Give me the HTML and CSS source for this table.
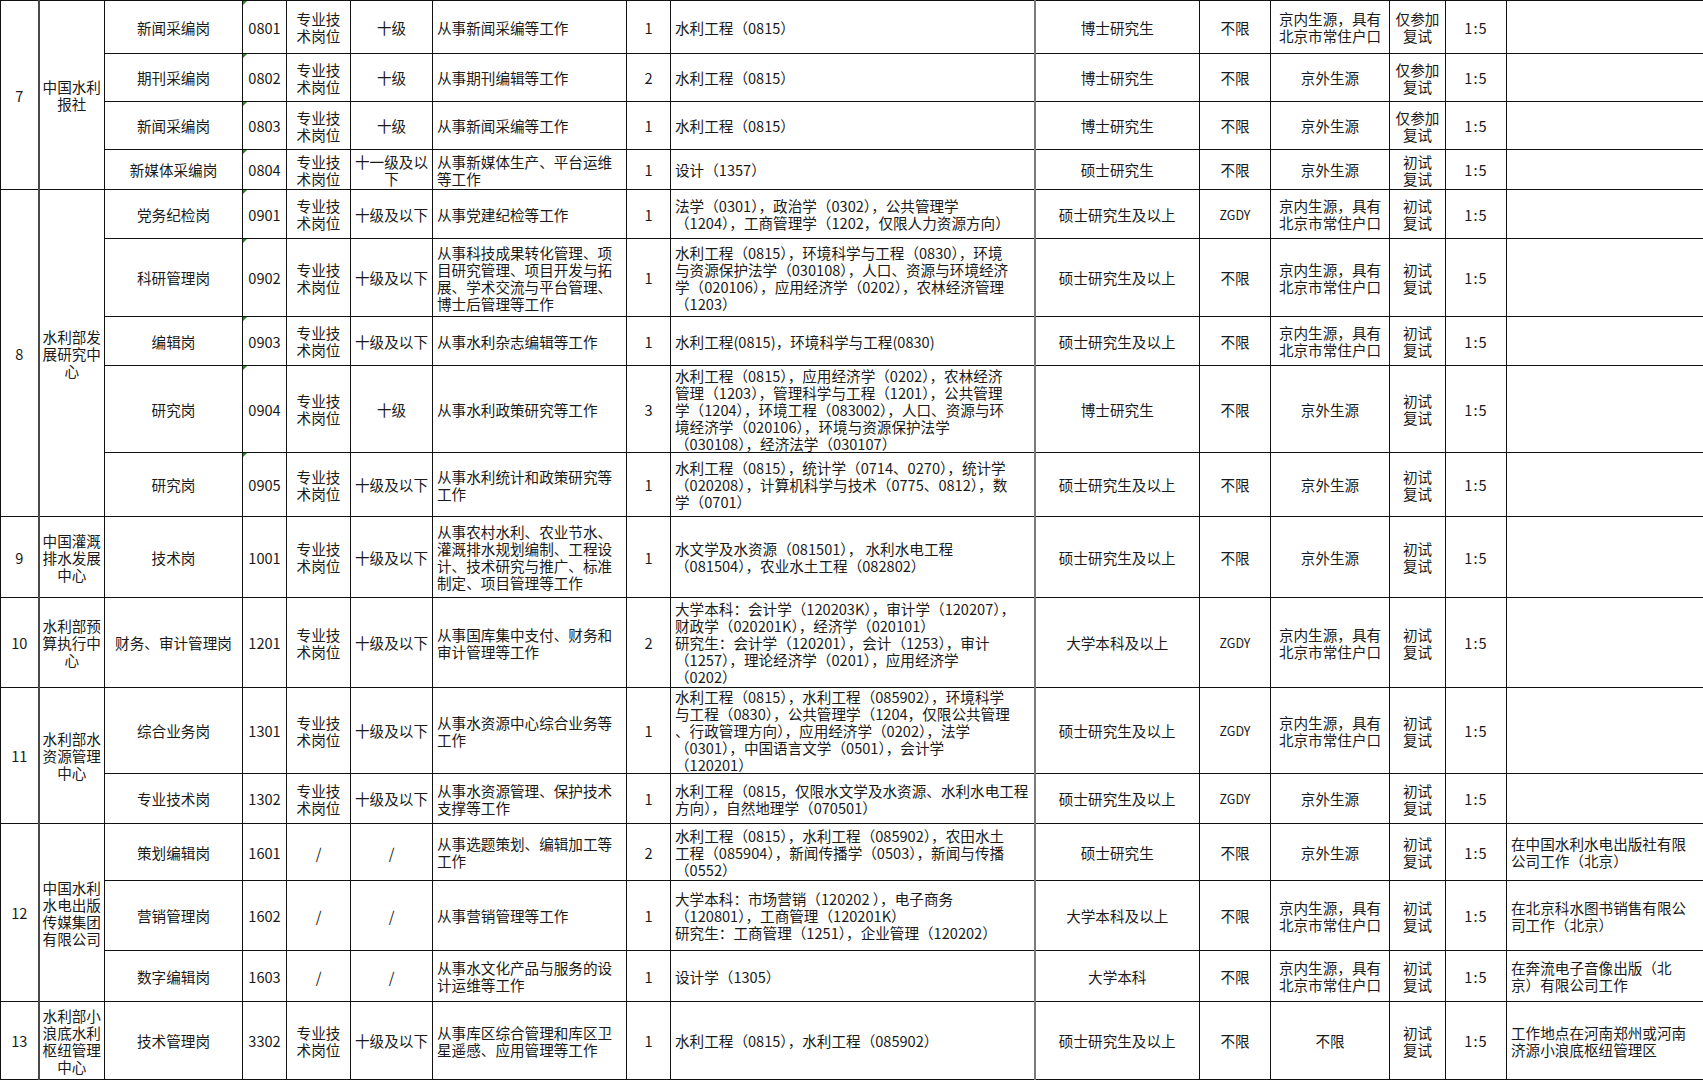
FILE: index.html
```html
<!DOCTYPE html>
<html lang="zh-CN">
<head>
<meta charset="utf-8">
<title>招聘岗位表</title>
<link rel="stylesheet" href="styles.css">
</head>
<body>
<table class="sheet">
  <colgroup>
    <col class="w38"><col class="w66"><col class="w138"><col class="w44"><col class="w64"><col class="w82"><col class="w194"><col class="w44"><col class="w364"><col class="w165"><col class="w71"><col class="w119"><col class="w56"><col class="w61"><col class="w197">
  </colgroup>
  <tbody>
    <tr class="h53">
      <td class="no" rowspan="4">7</td>
      <td class="org" rowspan="4">中国水利<br>报社</td>
      <td>新闻采编岗</td><td class="code tri">0801</td><td>专业技<br>术岗位</td><td>十级</td>
      <td class="left">从事新闻采编等工作</td><td>1</td>
      <td class="left major">水利工程（0815）</td><td class="deg">博士研究生</td><td>不限</td>
      <td>京内生源，具有<br>北京市常住户口</td><td>仅参加<br>复试</td><td class="ratio">1:5</td><td class="left"></td>
    </tr>
    <tr class="h48">
      <td>期刊采编岗</td><td class="code tri">0802</td><td>专业技<br>术岗位</td><td>十级</td>
      <td class="left">从事期刊编辑等工作</td><td>2</td>
      <td class="left major">水利工程（0815）</td><td class="deg">博士研究生</td><td>不限</td>
      <td>京外生源</td><td>仅参加<br>复试</td><td class="ratio">1:5</td><td class="left"></td>
    </tr>
    <tr class="h48">
      <td>新闻采编岗</td><td class="code tri">0803</td><td>专业技<br>术岗位</td><td>十级</td>
      <td class="left">从事新闻采编等工作</td><td>1</td>
      <td class="left major">水利工程（0815）</td><td class="deg">博士研究生</td><td>不限</td>
      <td>京外生源</td><td>仅参加<br>复试</td><td class="ratio">1:5</td><td class="left"></td>
    </tr>
    <tr class="h40">
      <td>新媒体采编岗</td><td class="code tri">0804</td><td>专业技<br>术岗位</td><td>十一级及以<br>下</td>
      <td class="left">从事新媒体生产、平台运维<br>等工作</td><td>1</td>
      <td class="left major">设计（1357）</td><td class="deg">硕士研究生</td><td>不限</td>
      <td>京外生源</td><td>初试<br>复试</td><td class="ratio">1:5</td><td class="left"></td>
    </tr>

    <tr class="h49">
      <td class="no" rowspan="5">8</td>
      <td class="org" rowspan="5">水利部发<br>展研究中<br>心</td>
      <td>党务纪检岗</td><td class="code tri">0901</td><td>专业技<br>术岗位</td><td>十级及以下</td>
      <td class="left">从事党建纪检等工作</td><td>1</td>
      <td class="left major">法学（0301），政治学（0302），公共管理学<br>（1204），工商管理学（1202，仅限人力资源方向）</td>
      <td class="deg">硕士研究生及以上</td><td class="zg">ZGDY</td>
      <td>京内生源，具有<br>北京市常住户口</td><td>初试<br>复试</td><td class="ratio">1:5</td><td class="left"></td>
    </tr>
    <tr class="h78">
      <td>科研管理岗</td><td class="code tri">0902</td><td>专业技<br>术岗位</td><td>十级及以下</td>
      <td class="left">从事科技成果转化管理、项<br>目研究管理、项目开发与拓<br>展、学术交流与平台管理、<br>博士后管理等工作</td><td>1</td>
      <td class="left major">水利工程（0815），环境科学与工程（0830），环境<br>与资源保护法学（030108），人口、资源与环境经济<br>学（020106），应用经济学（0202），农林经济管理<br>（1203）</td>
      <td class="deg">硕士研究生及以上</td><td>不限</td>
      <td>京内生源，具有<br>北京市常住户口</td><td>初试<br>复试</td><td class="ratio">1:5</td><td class="left"></td>
    </tr>
    <tr class="h49">
      <td>编辑岗</td><td class="code tri">0903</td><td>专业技<br>术岗位</td><td>十级及以下</td>
      <td class="left">从事水利杂志编辑等工作</td><td>1</td>
      <td class="left major">水利工程(0815)，环境科学与工程(0830)</td>
      <td class="deg">硕士研究生及以上</td><td>不限</td>
      <td>京内生源，具有<br>北京市常住户口</td><td>初试<br>复试</td><td class="ratio">1:5</td><td class="left"></td>
    </tr>
    <tr class="h87">
      <td>研究岗</td><td class="code tri">0904</td><td>专业技<br>术岗位</td><td>十级</td>
      <td class="left">从事水利政策研究等工作</td><td>3</td>
      <td class="left major">水利工程（0815），应用经济学（0202），农林经济<br>管理（1203），管理科学与工程（1201），公共管理<br>学（1204），环境工程（083002），人口、资源与环<br>境经济学（020106），环境与资源保护法学<br>（030108），经济法学（030107）</td>
      <td class="deg">博士研究生</td><td>不限</td>
      <td>京外生源</td><td>初试<br>复试</td><td class="ratio">1:5</td><td class="left"></td>
    </tr>
    <tr class="h64">
      <td>研究岗</td><td class="code tri">0905</td><td>专业技<br>术岗位</td><td>十级及以下</td>
      <td class="left">从事水利统计和政策研究等<br>工作</td><td>1</td>
      <td class="left major">水利工程（0815），统计学（0714、0270），统计学<br>（020208），计算机科学与技术（0775、0812），数<br>学（0701）</td>
      <td class="deg">硕士研究生及以上</td><td>不限</td>
      <td>京外生源</td><td>初试<br>复试</td><td class="ratio">1:5</td><td class="left"></td>
    </tr>

    <tr class="h81">
      <td class="no">9</td>
      <td class="org">中国灌溉<br>排水发展<br>中心</td>
      <td>技术岗</td><td class="code">1001</td><td>专业技<br>术岗位</td><td>十级及以下</td>
      <td class="left">从事农村水利、农业节水、<br>灌溉排水规划编制、工程设<br>计、技术研究与推广、标准<br>制定、项目管理等工作</td><td>1</td>
      <td class="left major">水文学及水资源（081501）， 水利水电工程<br>（081504），农业水土工程（082802）</td>
      <td class="deg">硕士研究生及以上</td><td>不限</td>
      <td>京外生源</td><td>初试<br>复试</td><td class="ratio">1:5</td><td class="left"></td>
    </tr>

    <tr class="h90">
      <td class="no">10</td>
      <td class="org">水利部预<br>算执行中<br>心</td>
      <td>财务、审计管理岗</td><td class="code">1201</td><td>专业技<br>术岗位</td><td>十级及以下</td>
      <td class="left">从事国库集中支付、财务和<br>审计管理等工作</td><td>2</td>
      <td class="left major">大学本科：会计学（120203K），审计学（120207），<br>财政学（020201K），经济学（020101）<br>研究生：会计学（120201），会计（1253），审计<br>（1257），理论经济学（0201），应用经济学<br>（0202）</td>
      <td class="deg">大学本科及以上</td><td class="zg">ZGDY</td>
      <td>京内生源，具有<br>北京市常住户口</td><td>初试<br>复试</td><td class="ratio">1:5</td><td class="left"></td>
    </tr>

    <tr class="h86">
      <td class="no" rowspan="2">11</td>
      <td class="org" rowspan="2">水利部水<br>资源管理<br>中心</td>
      <td>综合业务岗</td><td class="code">1301</td><td>专业技<br>术岗位</td><td>十级及以下</td>
      <td class="left">从事水资源中心综合业务等<br>工作</td><td>1</td>
      <td class="left major">水利工程（0815），水利工程（085902），环境科学<br>与工程（0830），公共管理学（1204，仅限公共管理<br>、行政管理方向），应用经济学（0202），法学<br>（0301），中国语言文学（0501），会计学<br>（120201）</td>
      <td class="deg">硕士研究生及以上</td><td class="zg">ZGDY</td>
      <td>京内生源，具有<br>北京市常住户口</td><td>初试<br>复试</td><td class="ratio">1:5</td><td class="left"></td>
    </tr>
    <tr class="h50">
      <td>专业技术岗</td><td class="code">1302</td><td>专业技<br>术岗位</td><td>十级及以下</td>
      <td class="left">从事水资源管理、保护技术<br>支撑等工作</td><td>1</td>
      <td class="left major">水利工程（0815，仅限水文学及水资源、水利水电工程<br>方向），自然地理学（070501）</td>
      <td class="deg">硕士研究生及以上</td><td class="zg">ZGDY</td>
      <td>京外生源</td><td>初试<br>复试</td><td class="ratio">1:5</td><td class="left"></td>
    </tr>

    <tr class="h57">
      <td class="no" rowspan="3">12</td>
      <td class="org" rowspan="3">中国水利<br>水电出版<br>传媒集团<br>有限公司</td>
      <td>策划编辑岗</td><td class="code">1601</td><td>/</td><td>/</td>
      <td class="left">从事选题策划、编辑加工等<br>工作</td><td>2</td>
      <td class="left major">水利工程（0815），水利工程（085902），农田水土<br>工程（085904），新闻传播学（0503），新闻与传播<br>（0552）</td>
      <td class="deg">硕士研究生</td><td>不限</td>
      <td>京外生源</td><td>初试<br>复试</td><td class="ratio">1:5</td>
      <td class="left">在中国水利水电出版社有限<br>公司工作（北京）</td>
    </tr>
    <tr class="h70">
      <td>营销管理岗</td><td class="code">1602</td><td>/</td><td>/</td>
      <td class="left">从事营销管理等工作</td><td>1</td>
      <td class="left major">大学本科：市场营销（120202 ），电子商务<br>（120801），工商管理（120201K）<br>研究生：工商管理（1251），企业管理（120202）</td>
      <td class="deg">大学本科及以上</td><td>不限</td>
      <td>京内生源，具有<br>北京市常住户口</td><td>初试<br>复试</td><td class="ratio">1:5</td>
      <td class="left">在北京科水图书销售有限公<br>司工作（北京）</td>
    </tr>
    <tr class="h51">
      <td>数字编辑岗</td><td class="code">1603</td><td>/</td><td>/</td>
      <td class="left">从事水文化产品与服务的设<br>计运维等工作</td><td>1</td>
      <td class="left major">设计学（1305）</td>
      <td class="deg">大学本科</td><td>不限</td>
      <td>京内生源，具有<br>北京市常住户口</td><td>初试<br>复试</td><td class="ratio">1:5</td>
      <td class="left">在奔流电子音像出版（北<br>京）有限公司工作</td>
    </tr>

    <tr class="h78">
      <td class="no">13</td>
      <td class="org">水利部小<br>浪底水利<br>枢纽管理<br>中心</td>
      <td>技术管理岗</td><td class="code">3302</td><td>专业技<br>术岗位</td><td>十级及以下</td>
      <td class="left">从事库区综合管理和库区卫<br>星遥感、应用管理等工作</td><td>1</td>
      <td class="left major">水利工程（0815），水利工程（085902）</td>
      <td class="deg">硕士研究生及以上</td><td>不限</td>
      <td>不限</td><td>初试<br>复试</td><td class="ratio">1:5</td>
      <td class="left">工作地点在河南郑州或河南<br>济源小浪底枢纽管理区</td>
    </tr>
  </tbody>
</table>
</body>
</html>
```

FILE: styles.css
```css
html, body {
  margin: 0;
  padding: 0;
  background: #ffffff;
}

.sheet {
  border-collapse: collapse;
  table-layout: fixed;
  width: 1703px;
  font-family: "SimSun", "Noto Sans CJK SC", "Noto Sans", sans-serif;
  font-size: 14.6px;
  line-height: 17px;
  color: #1a1a1a;
}

.w38 { width: 38px; }
.w66 { width: 66px; }
.w138 { width: 138px; }
.w44 { width: 44px; }
.w64 { width: 64px; }
.w82 { width: 82px; }
.w194 { width: 194px; }
.w364 { width: 364px; }
.w165 { width: 165px; }
.w71 { width: 71px; }
.w119 { width: 119px; }
.w56 { width: 56px; }
.w61 { width: 61px; }
.w197 { width: 197px; }

.h40 { height: 40px; }
.h48 { height: 48px; }
.h49 { height: 49px; }
.h50 { height: 50px; }
.h51 { height: 51px; }
.h53 { height: 53px; }
.h57 { height: 57px; }
.h64 { height: 64px; }
.h70 { height: 70px; }
.h78 { height: 78px; }
.h81 { height: 81px; }
.h86 { height: 86px; }
.h87 { height: 87px; }
.h90 { height: 90px; }

.sheet td {
  border: 1px solid #111;
  padding: 0 2px;
  text-align: center;
  vertical-align: middle;
  white-space: nowrap;
  overflow: hidden;
}

.sheet td.left {
  text-align: left;
  padding-left: 4px;
}

.sheet td.no {
  border-right: 2px solid #4a4a4a;
}

.sheet td.major {
  border-right: 2px solid #7a7a7a;
}

.sheet td.code {
  padding: 0;
}

.sheet td.tri {
  position: relative;
}

.sheet td.tri::before {
  content: "";
  position: absolute;
  left: 0;
  top: 0;
  width: 0;
  height: 0;
  border-top: 4px solid #1e8c1e;
  border-right: 4px solid transparent;
}

.sheet td.zg {
  font-size: 12.5px;
}

.sheet td.ratio {
  letter-spacing: 1px;
}
```
